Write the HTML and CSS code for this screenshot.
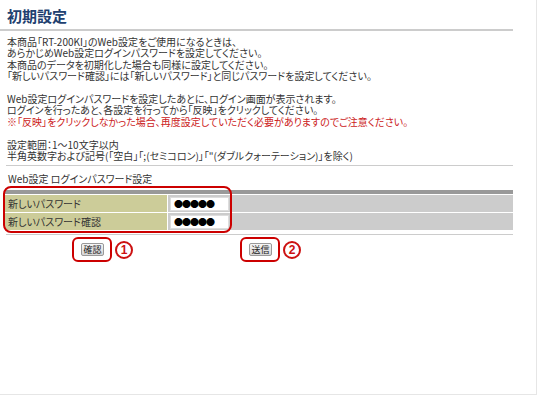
FILE: index.html
```html
<!DOCTYPE html>
<html>
    <head>
        <meta charset="utf-8">
        <title>初期設定</title>
        <link rel="stylesheet" href="styles.css">
    </head>
    <body>
        <div class="frame">
            <h1 class="title">初期設定</h1>
            <div class="intro">
                <p>本商品「RT-200KI」のWeb設定をご使用になるときは、<br>
                あらかじめWeb設定ログインパスワードを設定してください。<br>
                本商品のデータを初期化した場合も同様に設定してください。<br>
                「新しいパスワード確認」には「新しいパスワード」と同じパスワードを設定してください。</p>
                <p>Web設定ログインパスワードを設定したあとに、ログイン画面が表示されます。<br>
                ログインを行ったあと、各設定を行ってから「反映」をクリックしてください。<br>
                <span class="warn">※「反映」をクリックしなかった場合、再度設定していただく必要がありますのでご注意ください。</span></p>
                <p>設定範囲：1～10文字以内<br>
                半角英数字および記号(「空白」「;(セミコロン)」「"(ダブルクォーテーション)」を除く)</p>
            </div>
            <div class="rule"></div>
            <div class="caption">Web設定 ログインパスワード設定</div>
            <div class="settings">
                <div class="settings-head"></div>
                <div class="row">
                    <div class="label">新しいパスワード</div>
                    <div class="value"><span class="field">●●●●●</span></div>
                </div>
                <div class="row">
                    <div class="label">新しいパスワード確認</div>
                    <div class="value"><span class="field">●●●●●</span></div>
                </div>
                <div class="highlight"></div>
            </div>
            <div class="rule rule-bottom"></div>
            <div class="actions">
                <div class="action first">
                    <span class="mark"><button class="btn">確認</button></span>
                    <span class="num">1</span>
                </div>
                <div class="action second">
                    <span class="mark"><button class="btn">送信</button></span>
                    <span class="num">2</span>
                </div>
            </div>
        </div>
    </body>
</html>
```

FILE: styles.css
```css
body{
    margin:0;
    padding:0;
    background-color:#fff;
    font-family:"Noto Sans CJK JP", sans-serif;
    color:#333;
}
.frame{
    width:537px;
    height:395px;
    box-sizing:border-box;
    border-right:1px solid #e6e6e6;
    border-bottom:1px solid #e6e6e6;
}
.title{
    margin:0;
    width:506px;
    padding:7px 0 4px 7px;
    font-size:15px;
    line-height:18px;
    font-weight:bold;
    color:#21406f;
    border-bottom:2px solid #cccccc;
}
.intro{
    margin-top:5px;
    padding-left:7px;
    font-size:10px;
    line-height:11.4px;
    font-feature-settings:"palt";
}
.intro p{
    margin:0 0 11.4px 0;
}
.intro p:last-child{
    margin-bottom:0;
}
.warn{
    color:#cc2222;
}
.rule{
    margin:4px 0 0 6px;
    width:507px;
    border-top:1px solid #cccccc;
}
.caption{
    margin-top:7px;
    padding-left:8px;
    font-size:10px;
    line-height:12px;
    font-feature-settings:"palt";
}
.settings{
    position:relative;
    margin:1px 0 0 5px;
    padding-top:4px;
    width:508px;
    font-size:10px;
    font-feature-settings:"palt";
}
.settings-head{
    height:4px;
    background-color:#999999;
    margin-bottom:1px;
}
.row{
    display:grid;
    grid-template-columns:162px 1fr;
    column-gap:1px;
    margin-bottom:1px;
    height:17px;
}
.label{
    background-color:#cccc99;
    padding-left:3px;
    line-height:17px;
}
.value{
    background-color:#cccccc;
    display:flex;
    align-items:center;
}
.field{
    margin-left:2px;
    width:54px;
    height:12px;
    padding-left:3px;
    background-color:#fff;
    border:1px solid #dddddd;
    font-size:9px;
    line-height:12px;
    letter-spacing:-1px;
    color:#000;
}
.highlight{
    position:absolute;
    left:-2px;
    top:0;
    width:225px;
    height:43px;
    border:2px solid #cc0000;
    border-radius:8px;
}
.rule-bottom{
    margin-top:4px;
}
.actions{
    display:flex;
    padding-top:2px;
}
.action{
    display:flex;
    align-items:center;
    gap:3px;
}
.first{
    margin-left:72px;
}
.second{
    margin-left:107px;
}
.mark{
    display:inline-flex;
    padding:4px 6px 4px 7px;
    border:2px solid #cc0000;
    border-radius:6px;
}
.btn{
    width:23px;
    height:13px;
    padding:0;
    font-family:"Noto Sans CJK JP", sans-serif;
    font-size:9px;
    line-height:11px;
    color:#222;
    background:linear-gradient(#f6f6f6, #d6d6d6);
    border:1px solid #999999;
    border-radius:2px;
}
.num{
    width:14px;
    height:14px;
    border:2px solid #cc1111;
    border-radius:50%;
    color:#cc1111;
    font-family:"Liberation Sans", sans-serif;
    font-weight:bold;
    font-size:12px;
    line-height:14px;
    text-align:center;
}
```
